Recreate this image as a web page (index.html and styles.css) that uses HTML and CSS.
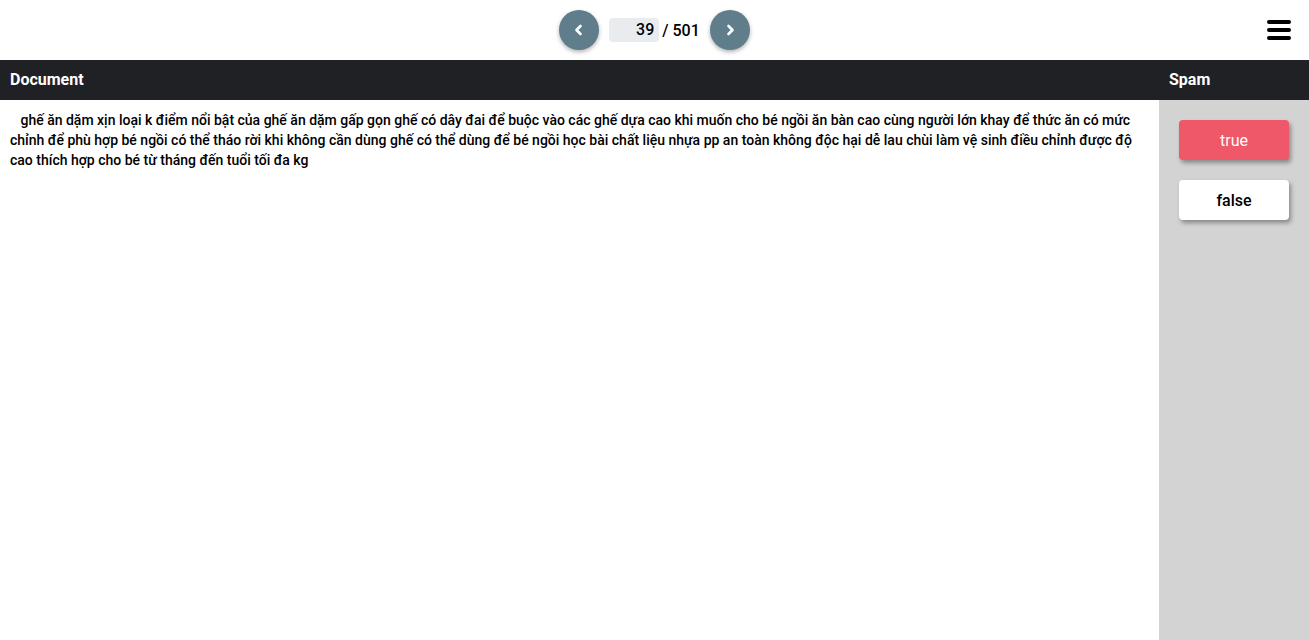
FILE: index.html
```html
<!DOCTYPE html>
<html lang="vi">
<head>
<meta charset="utf-8">
<link rel="stylesheet" href="styles.css">
</head>
<body>
<header class="topbar">
  <div class="pager">
    <button class="nav-btn" aria-label="previous">
      <svg width="14" height="14" viewBox="0 0 14 14"><path d="M8.5 3 L4.5 7 L8.5 11" fill="none" stroke="#fff" stroke-width="2.6" stroke-linecap="round" stroke-linejoin="round"/></svg>
    </button>
    <span class="page-input">39</span>
    <span class="page-total">/ 501</span>
    <button class="nav-btn" aria-label="next">
      <svg width="14" height="14" viewBox="0 0 14 14"><path d="M5.5 3 L9.5 7 L5.5 11" fill="none" stroke="#fff" stroke-width="2.6" stroke-linecap="round" stroke-linejoin="round"/></svg>
    </button>
  </div>
  <button class="menu" aria-label="menu">
    <svg width="26" height="22" viewBox="0 0 26 22"><path d="M3 3H23M3 11H23M3 19H23" stroke="#000" stroke-width="4" stroke-linecap="round"/></svg>
  </button>
</header>
<main class="table">
  <div class="head">
    <div class="col-doc">Document</div>
    <div class="col-spam">Spam</div>
  </div>
  <div class="body">
    <div class="doc">&nbsp;&nbsp; ghế ăn dặm xịn loại k điểm nổi bật của ghế ăn dặm gấp gọn ghế có dây đai để buộc vào các ghế dựa cao khi muốn cho bé ngồi ăn bàn cao cùng người lớn khay để thức ăn có mức chỉnh để phù hợp bé ngồi có thể tháo rời khi không cần dùng ghế có thể dùng để bé ngồi học bài chất liệu nhựa pp an toàn không độc hại dễ lau chùi làm vệ sinh điều chỉnh được độ cao thích hợp cho bé từ tháng đến tuổi tối đa kg</div>
    <div class="spam">
      <button class="choice choice-true">true</button>
      <button class="choice choice-false">false</button>
    </div>
  </div>
</main>
</body>
</html>
```
FILE: styles.css
```css
* { box-sizing: border-box; }
html, body { margin: 0; height: 100%; }
body {
  font-family: Roboto, "Noto Sans", sans-serif;
  color: #000;
  background: #fff;
  display: flex;
  flex-direction: column;
  overflow: hidden;
}
.topbar {
  height: 60px;
  flex: 0 0 60px;
  display: flex;
  align-items: center;
  justify-content: center;
  position: relative;
}
.pager {
  display: flex;
  align-items: center;
}
.nav-btn {
  width: 40px;
  height: 40px;
  border-radius: 50%;
  border: none;
  background: #607d8b;
  display: flex;
  align-items: center;
  justify-content: center;
  padding: 0;
  box-shadow: 0 2px 4px rgba(0,0,0,0.3);
}
.page-input {
  margin-left: 10px;
  width: 50px;
  height: 24px;
  background: #e9ecef;
  border-radius: 4px;
  font-size: 16px;
  font-weight: 500;
  line-height: 24px;
  text-align: right;
  padding-right: 5px;
}
.page-total {
  font-size: 16px;
  font-weight: 500;
  margin-left: 3px;
  margin-right: 10px;
}
.menu {
  position: absolute;
  right: 17px;
  top: 19px;
  border: none;
  background: none;
  padding: 0;
  width: 26px;
  height: 22px;
}
.table {
  flex: 1;
  display: flex;
  flex-direction: column;
}
.head {
  height: 40px;
  background: #202124;
  color: #fff;
  font-weight: 700;
  font-size: 16px;
  display: flex;
  align-items: center;
  padding-bottom: 2px;
}
.col-doc { flex: 1; padding-left: 10px; }
.col-spam { width: 150px; padding-left: 10px; }
.body {
  flex: 1;
  display: flex;
}
.doc {
  flex: 1;
  padding: 10px 20px 0 10px;
  font-size: 14px;
  font-weight: 500;
  line-height: 20px;
}
.spam {
  width: 150px;
  background: #d3d3d3;
  padding: 20px;
  display: flex;
  flex-direction: column;
  gap: 20px;
}
.choice {
  width: 110px;
  height: 40px;
  border: none;
  border-radius: 4px;
  font-family: Roboto, "Noto Sans", sans-serif;
  font-size: 16px;
  font-weight: 500;
  box-shadow: 2px 3px 4px rgba(0,0,0,0.35);
}
.choice-true { background: #ef5868; color: #fff; font-weight: 400; }
.choice-false { background: #fff; color: #000; }
```
